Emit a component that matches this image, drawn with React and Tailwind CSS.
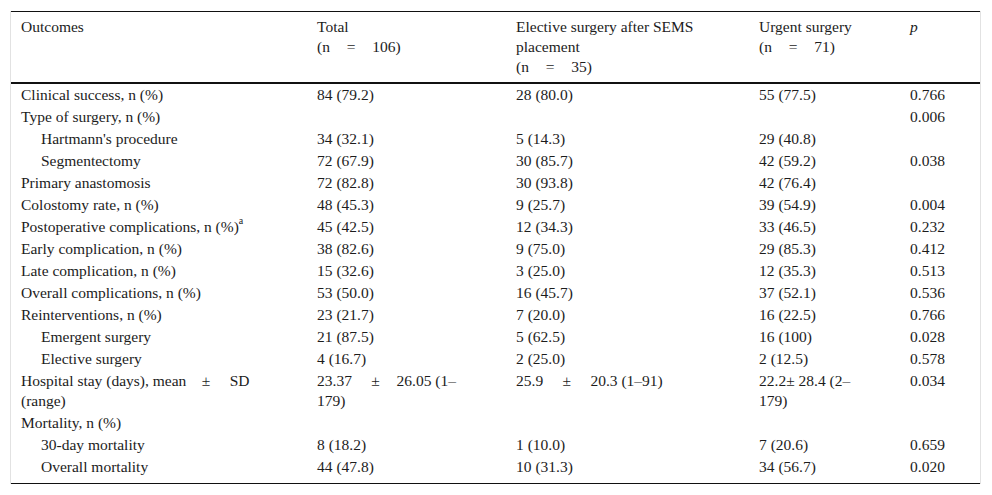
const EM = "\u2003";
const GAP = "\u2003\u200A";

const rows = [
  { label: "Clinical success, n (%)", total: "84 (79.2)", elective: "28 (80.0)", urgent: "55 (77.5)", p: "0.766" },
  { label: "Type of surgery, n (%)", total: "", elective: "", urgent: "", p: "0.006" },
  { label: "Hartmann's procedure", indent: true, total: "34 (32.1)", elective: "5 (14.3)", urgent: "29 (40.8)", p: "" },
  { label: "Segmentectomy", indent: true, total: "72 (67.9)", elective: "30 (85.7)", urgent: "42 (59.2)", p: "0.038" },
  { label: "Primary anastomosis", total: "72 (82.8)", elective: "30 (93.8)", urgent: "42 (76.4)", p: "" },
  { label: "Colostomy rate, n (%)", total: "48 (45.3)", elective: "9 (25.7)", urgent: "39 (54.9)", p: "0.004" },
  {
    label: (
      <>
        Postoperative complications, n (%)<sup className="text-[10px] leading-none align-[3px]">a</sup>
      </>
    ),
    total: "45 (42.5)",
    elective: "12 (34.3)",
    urgent: "33 (46.5)",
    p: "0.232",
  },
  { label: "Early complication, n (%)", total: "38 (82.6)", elective: "9 (75.0)", urgent: "29 (85.3)", p: "0.412" },
  { label: "Late complication, n (%)", total: "15 (32.6)", elective: "3 (25.0)", urgent: "12 (35.3)", p: "0.513" },
  { label: "Overall complications, n (%)", total: "53 (50.0)", elective: "16 (45.7)", urgent: "37 (52.1)", p: "0.536" },
  { label: "Reinterventions, n (%)", total: "23 (21.7)", elective: "7 (20.0)", urgent: "16 (22.5)", p: "0.766" },
  { label: "Emergent surgery", indent: true, total: "21 (87.5)", elective: "5 (62.5)", urgent: "16 (100)", p: "0.028" },
  { label: "Elective surgery", indent: true, total: "4 (16.7)", elective: "2 (25.0)", urgent: "2 (12.5)", p: "0.578" },
  {
    label: (
      <>
        Hospital stay (days), mean{EM}±{EM} SD
        <br />
        (range)
      </>
    ),
    total: (
      <>
        23.37{EM} ±{GAP}26.05 (1–
        <br />
        179)
      </>
    ),
    elective: `25.9${EM} ±${EM} 20.3 (1–91)`,
    urgent: (
      <>
        22.2± 28.4 (2–
        <br />
        179)
      </>
    ),
    p: "0.034",
  },
  { label: "Mortality, n (%)", total: "", elective: "", urgent: "", p: "" },
  { label: "30-day mortality", indent: true, total: "8 (18.2)", elective: "1 (10.0)", urgent: "7 (20.6)", p: "0.659" },
  { label: "Overall mortality", indent: true, total: "44 (47.8)", elective: "10 (31.3)", urgent: "34 (56.7)", p: "0.020" },
];

export default function App() {
  return (
    <div className="w-[992px] h-[495px] bg-white pt-[11px] pl-[10px]">
      <div className="w-[971px] border-x border-[#e2e2e2]">
        <table
          className="w-full table-fixed border-collapse text-[15.5px] leading-[20px] text-[#1c1c1c]"
          style={{ fontFamily: '"Liberation Serif", "Times New Roman", serif' }}
        >
          <colgroup>
            <col className="w-[296px]" />
            <col className="w-[199px]" />
            <col className="w-[243px]" />
            <col className="w-[151px]" />
            <col />
          </colgroup>
          <thead>
            <tr className="border-t border-b-2 border-[#111] align-top">
              <th className="pl-[10px] pt-[5px] pb-[5px] text-left font-normal">Outcomes</th>
              <th className="pl-[10px] pt-[5px] pb-[5px] text-left font-normal">
                Total
                <br />
                (n{GAP}={GAP}106)
              </th>
              <th className="pl-[10px] pt-[5px] pb-[5px] text-left font-normal">
                Elective surgery after SEMS
                <br />
                placement
                <br />
                (n{GAP}={GAP}35)
              </th>
              <th className="pl-[10px] pt-[5px] pb-[5px] text-left font-normal">
                Urgent surgery
                <br />
                (n{GAP}={GAP}71)
              </th>
              <th className="pl-[10px] pt-[5px] pb-[5px] text-left font-normal italic">p</th>
            </tr>
          </thead>
          <tbody className="border-b border-[#111]">
            {rows.map((r, i) => {
              const last = i === rows.length - 1;
              const cell = `pl-[10px] pt-px ${last ? "pb-[6px]" : "pb-px"} align-top whitespace-nowrap`;
              return (
                <tr key={i}>
                  <td className={`${cell} ${r.indent ? "!pl-[30px]" : ""}`}>{r.label}</td>
                  <td className={cell}>{r.total}</td>
                  <td className={cell}>{r.elective}</td>
                  <td className={cell}>{r.urgent}</td>
                  <td className={cell}>{r.p}</td>
                </tr>
              );
            })}
          </tbody>
        </table>
      </div>
    </div>
  );
}
